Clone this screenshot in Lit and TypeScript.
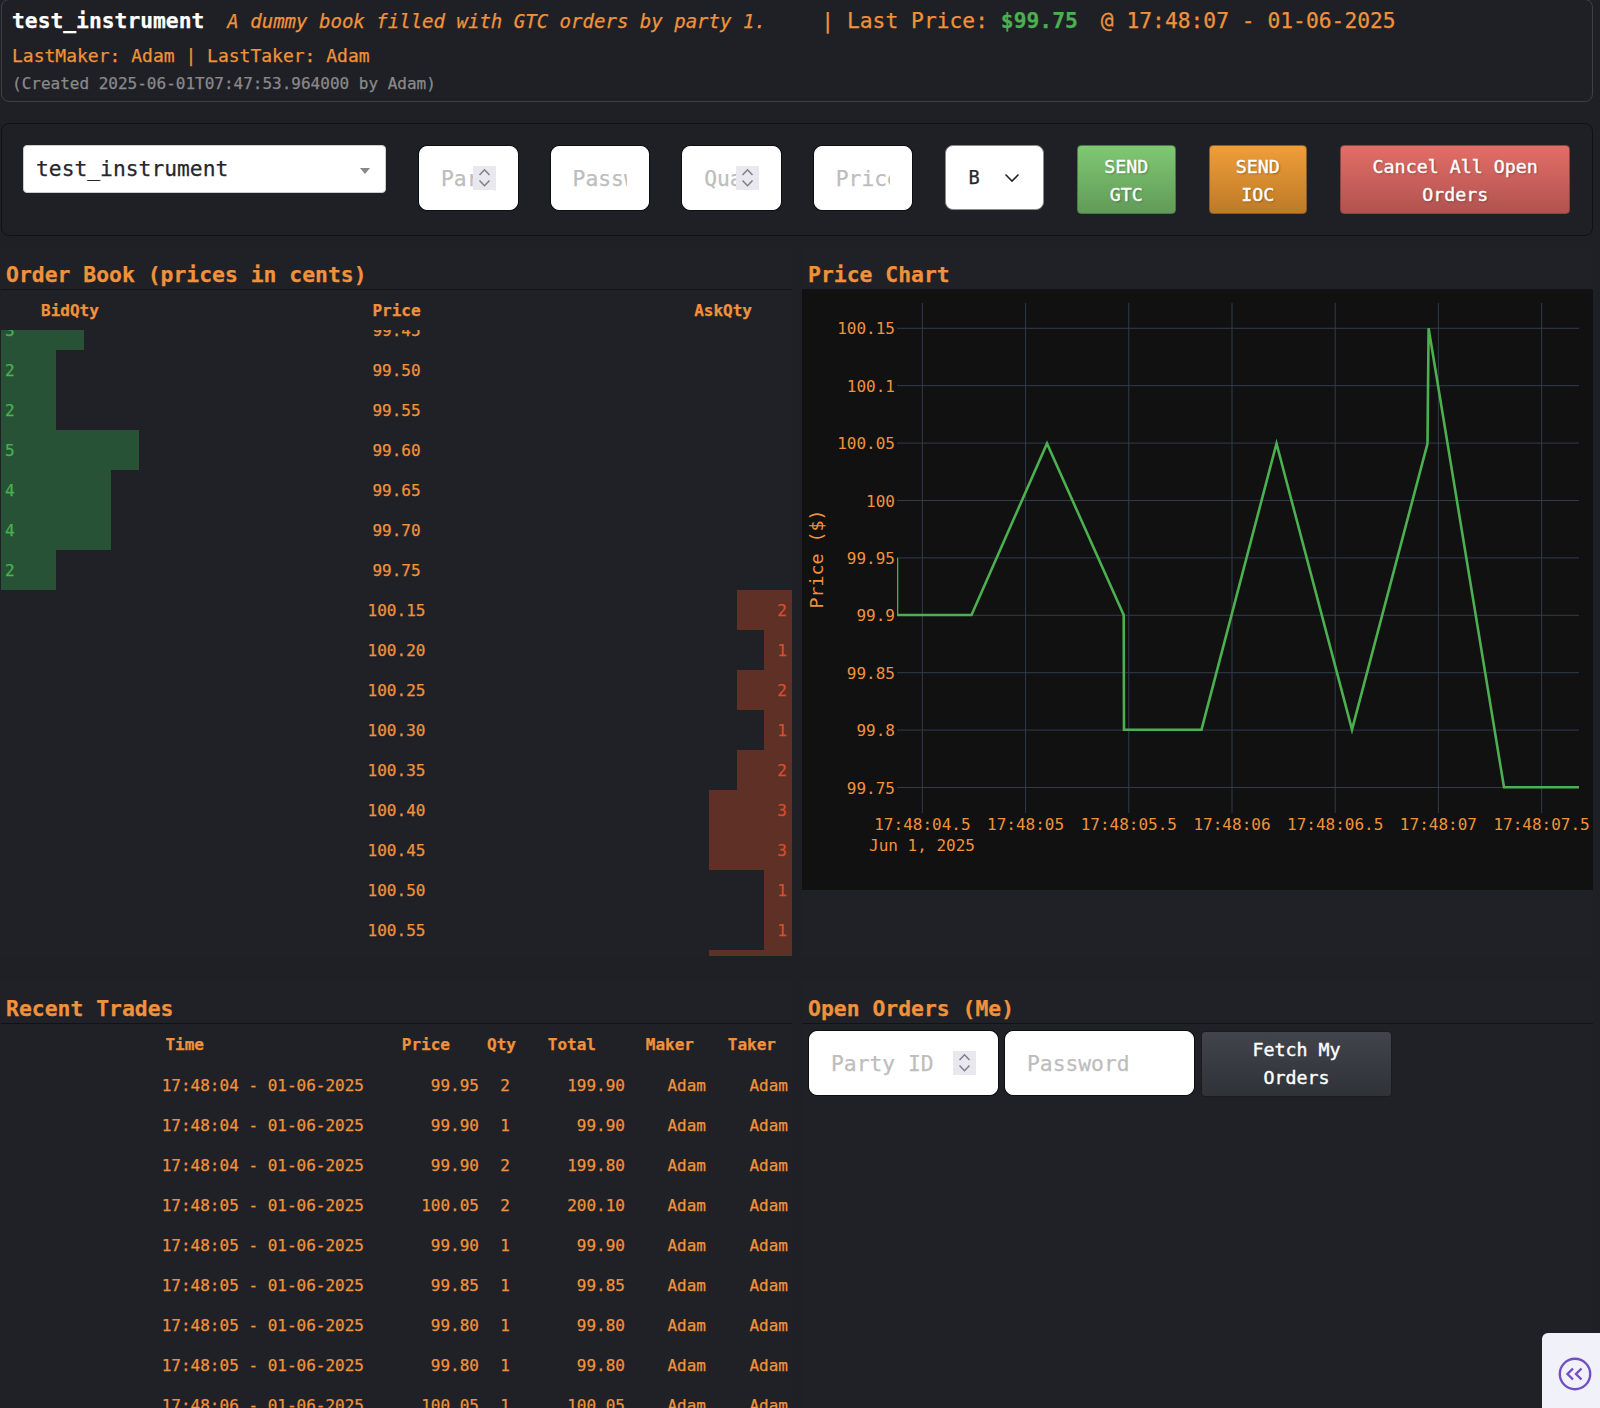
import { LitElement, html, css, svg } from "lit";
import { customElement } from "lit/decorators.js";

const BIDS = [
  ["99.45", 3],
  ["99.50", 2],
  ["99.55", 2],
  ["99.60", 5],
  ["99.65", 4],
  ["99.70", 4],
  ["99.75", 2],
] as const;
const ASKS = [
  ["100.15", 2],
  ["100.20", 1],
  ["100.25", 2],
  ["100.30", 1],
  ["100.35", 2],
  ["100.40", 3],
  ["100.45", 3],
  ["100.50", 1],
  ["100.55", 1],
  ["100.60", 3],
] as const;
const UNIT = 27.6;

const TRADES = [
  ["17:48:04", "99.95", 2, "199.90"],
  ["17:48:04", "99.90", 1, "99.90"],
  ["17:48:04", "99.90", 2, "199.80"],
  ["17:48:05", "100.05", 2, "200.10"],
  ["17:48:05", "99.90", 1, "99.90"],
  ["17:48:05", "99.85", 1, "99.85"],
  ["17:48:05", "99.80", 1, "99.80"],
  ["17:48:05", "99.80", 1, "99.80"],
  ["17:48:06", "100.05", 1, "100.05"],
] as const;

// chart coordinates are page pixels, the svg viewBox starts at the plot's corner
const yTicks = ["100.15", "100.1", "100.05", "100", "99.95", "99.9", "99.85", "99.8", "99.75"];
const xTicks = ["17:48:04.5", "17:48:05", "17:48:05.5", "17:48:06", "17:48:06.5", "17:48:07", "17:48:07.5"];
const yAt = (i: number) => 328.3 + i * 57.4;
const xAt = (i: number) => 922.4 + i * 103.2;
const LINE = "897,557.7 897,615 971.5,615 1047,443.5 1123.7,615 1124,729.7 1201.5,729.7 1276.5,443.5 1352,729.7 1427.5,443.5 1428.6,328.3 1504,787.3 1579,787.3";

const spinner = html`
  <svg class="spin" width="23" height="24" viewBox="0 0 23 24" fill="none" stroke="#7f7f8c" stroke-width="1.5">
    <path d="M6.5 9 11.5 3.8 16.5 9M6.5 14.5 11.5 19.7 16.5 14.5"></path>
  </svg>
`;

@customElement("app-root")
export class AppRoot extends LitElement {
  static styles = css`
    :host {
      display: block;
      position: relative;
      width: 1600px;
      height: 1408px;
      overflow: hidden;
      background: #1f2025;
      color: #f0923b;
      font-family: "DejaVu Sans Mono", "Liberation Mono", monospace;
      font-size: 16px;
      -webkit-text-stroke: 0.25px;
    }
    .page {
      width: 1592px;
      margin-left: 1px;
    }
    .info {
      box-sizing: border-box;
      height: 103px;
      margin-top: -1px;
      padding: 7px 10px 0;
      border: 1px solid #3f4044;
      border-radius: 8px;
    }
    .line1 {
      display: flex;
      align-items: center;
      height: 27px;
      font-size: 21.3px;
      white-space: pre;
    }
    .name {
      color: #fff;
      font-weight: 700;
    }
    .desc {
      width: 594px;
      margin-left: 23px;
      font-size: 19.05px;
      font-style: italic;
    }
    .last {
      color: #4caf50;
      font-weight: 700;
    }
    .at {
      margin-left: 23px;
    }
    .makers {
      margin-top: 10px;
      font-size: 18px;
      line-height: 24px;
    }
    .created {
      margin-top: 6px;
      color: #8a8a8a;
      line-height: 20px;
    }
    .controls {
      box-sizing: border-box;
      display: flex;
      align-items: flex-start;
      gap: 33px;
      height: 113px;
      margin-top: 21px;
      padding: 21px 0 0 21px;
      border: 1px solid #101114;
      border-radius: 8px;
    }
    .select {
      box-sizing: border-box;
      display: flex;
      align-items: center;
      justify-content: space-between;
      width: 363px;
      height: 48px;
      padding: 0 15px 2px 12px;
      background: #fff;
      border: 1px solid #ccc;
      border-radius: 4px;
      color: #26272b;
      font-size: 21.3px;
    }
    .caret {
      width: 0;
      height: 0;
      margin-top: 5px;
      border: 5.5px solid transparent;
      border-top: 6px solid #888;
      border-bottom: 0;
    }
    input {
      box-sizing: border-box;
      width: 100%;
      height: 100%;
      background: #fff;
      border: 1px solid #fff;
      border-radius: 8px;
      box-shadow: 0 0 0 1px #0d0e10;
      color: #222;
      font: inherit;
      font-size: 21.3px;
      padding: 0 21px;
      outline: none;
    }
    input::placeholder {
      color: #bdbdbd;
    }
    .field {
      position: relative;
      flex: none;
      width: 98.6px;
      height: 64px;
      margin-top: 1px;
    }
    .spin {
      position: absolute;
      top: 20px;
      right: 22px;
      background: #e8e8ee;
    }
    .side {
      box-sizing: border-box;
      display: flex;
      align-items: center;
      justify-content: space-between;
      flex: none;
      width: 98.6px;
      height: 65px;
      padding: 0 23px 0 22px;
      background: #fff;
      border: 1px solid #8a8a8a;
      border-radius: 8px;
      color: #26272b;
      font-size: 18.6px;
    }
    button {
      box-sizing: border-box;
      flex: none;
      width: 98.6px;
      height: 69px;
      padding: 2px 6px 0;
      border-radius: 4px;
      color: #fff;
      font: inherit;
      font-size: 18.3px;
      line-height: 28px;
      -webkit-text-stroke: 0.4px;
      text-shadow: 1px 1px 2px rgba(0, 0, 0, 0.35);
    }
    .gtc {
      background: linear-gradient(#7fc873, #619b58);
      border: 1px solid #4c7a46;
    }
    .ioc {
      background: linear-gradient(#ef9e39, #bd7a27);
      border: 1px solid #8c5c22;
    }
    .cancel {
      width: 230px;
      background: linear-gradient(#e36d67, #b0534f);
      border: 1px solid #8c4440;
    }
    .grid {
      display: grid;
      grid-template-columns: 791px 791px;
      gap: 24px 10px;
      margin-top: 11px;
    }
    .panel {
      height: 710px;
      background: #1f2126;
      overflow: hidden;
    }
    .panel.bottom {
      height: 427px;
    }
    h2 {
      box-sizing: border-box;
      height: 43px;
      margin: 0;
      padding: 14px 0 0 5px;
      border-bottom: 1px solid #121316;
      font-size: 21.4px;
      font-weight: 700;
      line-height: 28px;
    }
    .right h2 {
      padding-left: 6px;
    }
    .book-head,
    .book-row {
      display: grid;
      grid-template-columns: 1fr 1fr 1fr;
      height: 40px;
      line-height: 42px;
    }
    .book-head {
      font-weight: 700;
    }
    .book-head .b {
      padding-left: 40px;
    }
    .book-head .a {
      padding-right: 40px;
      text-align: right;
    }
    .p {
      text-align: center;
    }
    .scroll {
      height: 626px;
      overflow: hidden;
    }
    .rows {
      margin-top: -20px;
    }
    .bar {
      box-sizing: border-box;
      height: 40px;
    }
    .bar.bid {
      padding-left: 4px;
      background: #285236;
      color: #4caf50;
    }
    .bar.ask {
      margin-left: auto;
      padding-right: 5px;
      background: #5e3026;
      color: #d2502a;
      text-align: right;
    }
    .chart {
      display: block;
      width: 791px;
      height: 600px;
      background: #111112;
    }
    .chart text {
      fill: #f0923b;
      font-size: 16px;
    }
    .chart .axis-title {
      font-size: 18.3px;
    }
    .trade-head,
    .trade-row {
      display: grid;
      grid-template-columns: 370px 110px 50px 98px 82px 81px;
      height: 40px;
      line-height: 40px;
      text-align: right;
      white-space: nowrap;
    }
    .trade-head {
      margin-bottom: 2px;
      font-weight: 700;
      line-height: 42px;
    }
    .trade-head span:nth-child(1) { padding-right: 167px; }
    .trade-head span:nth-child(2) { padding-right: 31px; }
    .trade-head span:nth-child(3) { padding-right: 15px; }
    .trade-head span:nth-child(4) { padding-right: 33px; }
    .trade-head span:nth-child(5) { padding-right: 17px; }
    .trade-head span:nth-child(6) { padding-right: 16px; }
    .trade-row span:nth-child(1) { padding-right: 7px; }
    .trade-row span:nth-child(2) { padding-right: 2px; }
    .trade-row span:nth-child(3) { padding-right: 21px; }
    .trade-row span:nth-child(4) { padding-right: 4px; }
    .trade-row span:nth-child(5) { padding-right: 5px; }
    .trade-row span:nth-child(6) { padding-right: 4px; }
    .fetch {
      display: flex;
      align-items: flex-start;
      gap: 7px;
      padding: 7px 0 0 7px;
    }
    .fetch .field {
      width: 189px;
      margin-top: 0;
    }
    .fetch button {
      width: 191px;
      height: 66px;
      padding: 0 22px;
      background: linear-gradient(#41444b, #2f3237);
      border: 1px solid #1b1c1f;
      text-shadow: none;
    }
    .dock {
      position: absolute;
      right: 0;
      bottom: 0;
      display: flex;
      align-items: flex-start;
      justify-content: center;
      box-sizing: border-box;
      width: 58px;
      height: 75px;
      padding: 24px 0 0 7px;
      background: #f1f1f9;
      border-radius: 6px 0 0 0;
    }
    .dock svg {
      display: block;
    }
  `;

  private chart() {
    return svg`
      <clipPath id="plot"><rect x="897" y="303" width="682" height="510"></rect></clipPath>
      ${xTicks.map(
        (t, i) => svg`
          <line x1=${xAt(i)} x2=${xAt(i)} y1="303" y2="813" stroke="#303c4c"></line>
          <text x=${xAt(i)} y="830" text-anchor="middle">${t}</text>`,
      )}
      ${yTicks.map(
        (t, i) => svg`
          <line x1="897" x2="1579" y1=${yAt(i)} y2=${yAt(i)} stroke="#303c4c"></line>
          <text x="895" y=${yAt(i) + 6} text-anchor="end">${t}</text>`,
      )}
      <polyline points=${LINE} fill="none" stroke="#4caf50" stroke-width="2.6" clip-path="url(#plot)"></polyline>
      <text x="922" y="851" text-anchor="middle">Jun 1, 2025</text>
      <text class="axis-title" transform="translate(823 559) rotate(-90)" text-anchor="middle">Price ($)</text>
    `;
  }

  render() {
    return html`
      <div class="page">
        <div class="info">
          <div class="line1">
            <span class="name">test_instrument</span>
            <span class="desc">A dummy book filled with GTC orders by party 1.</span>
            <span>| Last Price: <span class="last">$99.75</span></span>
            <span class="at">@ 17:48:07 - 01-06-2025</span>
          </div>
          <div class="makers">LastMaker: Adam | LastTaker: Adam</div>
          <div class="created">(Created 2025-06-01T07:47:53.964000 by Adam)</div>
        </div>

        <div class="controls">
          <div class="select">test_instrument<span class="caret"></span></div>
          <div class="field"><input placeholder="Party ID" />${spinner}</div>
          <div class="field"><input type="password" placeholder="Password" /></div>
          <div class="field"><input placeholder="Quantity" />${spinner}</div>
          <div class="field"><input placeholder="Price" /></div>
          <div class="side">
            B
            <svg width="16" height="10" viewBox="0 0 16 10">
              <path d="M1.5 1.5 8 8l6.5-6.5" fill="none" stroke="#26272b" stroke-width="1.6"></path>
            </svg>
          </div>
          <button class="gtc">SEND GTC</button>
          <button class="ioc">SEND IOC</button>
          <button class="cancel">Cancel All Open Orders</button>
        </div>

        <div class="grid">
          <section class="panel">
            <h2>Order Book (prices in cents)</h2>
            <div class="book-head">
              <span class="b">BidQty</span><span class="p">Price</span><span class="a">AskQty</span>
            </div>
            <div class="scroll">
              <div class="rows">
                ${BIDS.map(
                  ([price, qty]) => html`
                    <div class="book-row">
                      <div><div class="bar bid" style="width:${qty * UNIT}px">${qty}</div></div>
                      <span class="p">${price}</span>
                      <div></div>
                    </div>
                  `,
                )}
                ${ASKS.map(
                  ([price, qty]) => html`
                    <div class="book-row">
                      <div></div>
                      <span class="p">${price}</span>
                      <div><div class="bar ask" style="width:${qty * UNIT}px">${qty}</div></div>
                    </div>
                  `,
                )}
              </div>
            </div>
          </section>

          <section class="panel right">
            <h2>Price Chart</h2>
            <svg class="chart" viewBox="802 290 791 600">${this.chart()}</svg>
          </section>

          <section class="panel bottom">
            <h2>Recent Trades</h2>
            <div class="trade-head">
              <span>Time</span><span>Price</span><span>Qty</span><span>Total</span><span>Maker</span><span>Taker</span>
            </div>
            ${TRADES.map(
              ([time, price, qty, total]) => html`
                <div class="trade-row">
                  <span>${time} - 01-06-2025</span><span>${price}</span><span>${qty}</span><span>${total}</span><span>Adam</span><span>Adam</span>
                </div>
              `,
            )}
          </section>

          <section class="panel bottom right">
            <h2>Open Orders (Me)</h2>
            <div class="fetch">
              <div class="field"><input placeholder="Party ID" />${spinner}</div>
              <div class="field"><input type="password" placeholder="Password" /></div>
              <button>Fetch My Orders</button>
            </div>
          </section>
        </div>
      </div>

      <div class="dock">
        <svg width="34" height="34" viewBox="0 0 34 34" fill="none" stroke="#7350c2" stroke-width="2.4">
          <circle cx="17" cy="17" r="15.2"></circle>
          <path d="M15 11.5 9.5 17l5.5 5.5M23.5 11.5 18 17l5.5 5.5"></path>
        </svg>
      </div>
    `;
  }
}
